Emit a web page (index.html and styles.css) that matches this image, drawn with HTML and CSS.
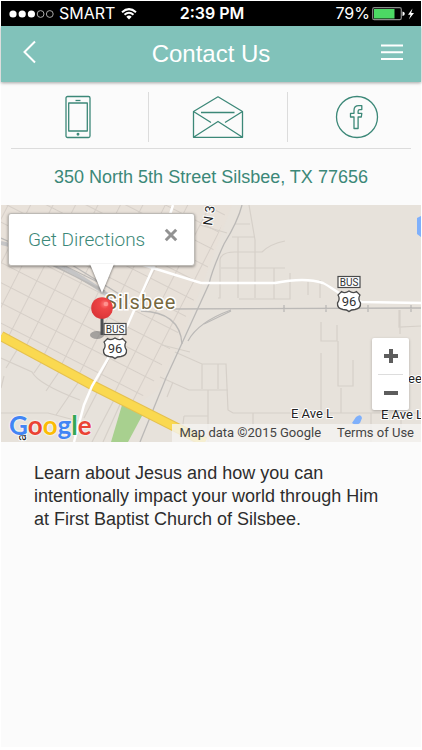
FILE: index.html
```html
<!DOCTYPE html>
<html lang="en">
<head>
<meta charset="utf-8">
<meta name="viewport" content="width=device-width, initial-scale=1">
<title>Contact Us</title>
<link rel="stylesheet" href="styles.css">
</head>
<body>
<div class="app">
  <div class="status">
    <div class="status-left">
      <svg class="signal" viewBox="0 0 46 10" aria-hidden="true">
        <circle cx="4" cy="5" r="3.6" class="on"/><circle cx="13.2" cy="5" r="3.6" class="on"/><circle cx="22.4" cy="5" r="3.6" class="on"/>
        <circle cx="31.6" cy="5" r="3.4" class="off"/><circle cx="40.8" cy="5" r="3.4" class="off"/>
      </svg>
      <span>SMART</span>
      <svg class="wifi" viewBox="0 0 16 12" aria-hidden="true">
        <path d="M1 4.2Q8-2 15 4.2M3.5 6.8Q8 2.8 12.5 6.8" class="arc"/><path d="M5.3 8.7Q8 6.4 10.7 8.7L8 11.6z" class="tip"/>
      </svg>
    </div>
    <span class="time">2:39 PM</span>
    <div class="status-right">
      <span>79%</span>
      <svg class="battery" viewBox="0 0 43 14" aria-hidden="true">
        <rect x="0.7" y="0.7" width="28.6" height="12" rx="1.6" fill="none" stroke="#8c8c8c" stroke-width="1.2"/>
        <rect x="2" y="2" width="20.5" height="9.500" fill="#4cd964"/>
        <path d="M30.500 4.500q2.300.4 2.300 2.200t-2.300 2.200z" fill="#fff"/>
        <path d="M40.500 1.500 36 7.700h2.600L37 12.200l5-6.200h-2.800z" fill="#fff"/>
      </svg>
    </div>
  </div>

  <header class="bar">
    <button class="bar-btn" type="button" aria-label="Back">
      <svg class="back" viewBox="0 0 14 24" aria-hidden="true"><path d="M12 1.500 1.500 12 12 22.500"/></svg>
    </button>
    <h1>Contact Us</h1>
    <button class="bar-btn" type="button" aria-label="Menu">
      <svg class="menu" viewBox="0 0 24 18" aria-hidden="true"><path d="M1 2.500h22M1 9.200h22M1 15.900h22"/></svg>
    </button>
  </header>

  <main>
    <nav class="channels" aria-label="Contact channels">
      <a href="#call" aria-label="Call">
        <svg class="ico phone" viewBox="0 0 26 44" aria-hidden="true">
          <rect x="1" y="1.500" width="24" height="41" rx="1.500"/><rect x="3.700" y="8" width="18.600" height="28"/><path d="M10.500 5.500h5"/><circle cx="13" cy="39.300" r=".8"/>
        </svg>
      </a>
      <a href="#email" aria-label="Email">
        <svg class="ico mail" viewBox="0 0 52 44" aria-hidden="true">
          <path d="M1.500 16.500 26 1.800 50.500 16.500V42.300h-49zM9 17.500h33.500M1.500 16.500 19 27.500M50.500 16.500 33 27.500M1.500 42.300 26 26.500 50.500 42.300"/>
        </svg>
      </a>
      <a href="#facebook" aria-label="Facebook">
        <svg class="ico fb" viewBox="0 0 44 44" aria-hidden="true">
          <circle cx="22" cy="22" r="20.500"/>
          <path d="M19 33.500v-11.500h-3.500v-3.700h3.500v-2.800q0-4.800 4.800-4.800h3v3.900h-2q-1.700 0-1.700 1.700v2h3.700l-.5 3.700h-3.200v11.500z"/>
        </svg>
      </a>
    </nav>

    <address>350 North 5th Street Silsbee, TX 77656</address>

    <section class="map" aria-label="Map">
      <svg class="tiles" viewBox="1 205 420 237" preserveAspectRatio="xMidYMid slice" role="img" aria-label="Map of Silsbee">
        <defs>
          <pattern id="blocks" width="20" height="18" patternUnits="userSpaceOnUse" patternTransform="translate(1 262) rotate(27)">
            <path d="M0 .5H20M.5 0V18" fill="none" stroke="#d6cfc8" stroke-width="1.100"/>
          </pattern>
          <radialGradient id="ball" cx=".62" cy=".32" r=".75"><stop offset="0" stop-color="#ff7a78"/><stop offset=".3" stop-color="#ee4546"/><stop offset="1" stop-color="#d93336"/></radialGradient>
          <g id="shield">
            <rect x="-11" y="-24.500" width="22" height="11" fill="#fff" stroke="#4a4a4a" stroke-width="1.200"/>
            <text x="0" y="-15.500" class="bus">BUS</text>
            <path d="M-7.500-9.500Q-4-7 0-10Q4-7 7.500-9.500L11-6Q8.500-2 11.500 2Q12 7.500 6 8.500Q2 8.500 0 10.500Q-2 8.500-6 8.500Q-12 7.500-11.500 2Q-8.500-2-11-6Z" fill="#fff" stroke="#4a4a4a" stroke-width="1.300"/>
            <text x="0" y="5" class="num">96</text>
          </g>
        </defs>
        <rect x="1" y="205" width="420" height="237" fill="#e7e2db"/>
        <path d="M1 205H232L205 278 186 328 158 390 137 404 1 334z" fill="#e8e1d9"/>
        <path d="M1 205H228L203 282 152 385 137 403 1 334z" fill="url(#blocks)"/>
        <path d="M128 442 143 414 136 408 122 405 111 442z" fill="#a8d08f"/>
        <g class="street">
          <path d="M1 358 32 372Q38 384 80 400M20 345 6 368M45 357 34 373M63 366 46 391M82 377 56 415M1 413H48L82 422M4 376 1 388M98 391 84 418M116 396 92 442M122 400 103 442"/>
          <path d="M175 352 202 364H226L228 410 233 413H421M202 364V389M218 364V389M160 377 189 390H228M208 390V442M184 416H208M184 416 182 432M253 413V430M173 382 167 397M162 345 190 352"/>
          <path d="M249 205 255 240V298M238 237V298M218 298H220V260Q221 252 235 252H262Q270 244 285 241M221 268H285M274 268V299M239 299H290V273M308 282V295M320 280V298M250 224H235M200 225 227 233M232 237H254"/>
          <path d="M321 322V341H337V325M338 341V386H353V360M341 388V413M321 353V413M399 310V327L421 326M371 413V442M400 310V334M401 413V440"/>
        </g>
        <g class="rail">
          <path d="M1 243Q48 252 112 298" class="band"/>
          <path d="M45 260 122 302M57 262 110 288M72 265 124 297M1 238 65 267M25 252 105 291"/>
          <path d="M242 205Q238 221 224 244 212 270 209 284L183 341 166 378 140 442"/>
          <path d="M166 309 421 308M284 305V312M326 305V312M368 305V312M411 305V312M188 341Q198 322 231 310"/>
          <path d="M141 311Q180 312 182 344M204 324 231 311"/>
        </g>
        <path d="M1 336 92 385 205 442" class="highway-edge"/><path d="M1 336 92 385 205 442" class="highway"/>
        <g class="main-road"><path d="M173 205 153 268 128 324 92 386 84 405 74 442"/><path d="M115 256 153 268 201 283H275Q305 277 323 283C335 289 345 300 362 302L421 303"/></g>
        <path d="M421 216 417 218V234L421 237zM356 417Q361 413 362 418L360 423Q356 426 352 423z" fill="#7fb0fb"/>
        <text class="place" x="105" y="309">Silsbee</text>
        <g class="road-name"><text x="291" y="418">E Ave L</text><text x="381" y="419">E Ave L</text><text x="408" y="383">ee</text><text transform="translate(212 226) rotate(-82)">N 3</text><text transform="translate(26 441) rotate(-90)">al</text></g>
        <use href="#shield" x="349" y="301"/>
        <ellipse cx="97" cy="335" rx="7" ry="4" fill="#777" opacity=".6"/>
        <use href="#shield" x="115" y="348"/>
        <path d="M102 316V335" stroke="#4e5053" stroke-width="3"/>
        <circle cx="102" cy="308" r="10.800" fill="url(#ball)"/><circle cx="106" cy="304" r="2.300" fill="#ff9c98" opacity=".8"/>
      </svg>

      <div class="callout">
        <a href="#directions">Get Directions</a>
        <button type="button" class="close" aria-label="Close"><svg viewBox="0 0 14 14" aria-hidden="true"><path d="M1.800 1.800 12.200 12.200M12.200 1.800 1.800 12.200"/></svg></button>
        <svg class="tail" viewBox="0 0 28 32" aria-hidden="true"><path d="M2 0H26L14 29z"/></svg>
      </div>

      <div class="zoom">
        <button type="button" aria-label="Zoom in"><svg viewBox="0 0 14 14" aria-hidden="true"><path d="M0 7H14M7 0V14"/></svg></button>
        <button type="button" aria-label="Zoom out"><svg viewBox="0 0 14 14" aria-hidden="true"><path d="M0 7H14"/></svg></button>
      </div>

      <a class="google" href="#google" aria-label="Google"><span class="b">G</span><span class="r">o</span><span class="y">o</span><span class="b">g</span><span class="g">l</span><span class="r">e</span></a>
      <div class="credit"><span>Map data ©2015 Google</span><a href="#terms">Terms of Use</a></div>
    </section>

    <p class="about">Learn about Jesus and how you can intentionally impact your world through Him at First Baptist Church of Silsbee.</p>
  </main>
</div>
</body>
</html>
```
FILE: styles.css
```css
* { box-sizing: border-box; }
body { margin: 0; padding: 1px; background: #fff; font-family: "Liberation Sans", Arial, sans-serif; }
button { padding: 0; border: 0; background: none; cursor: pointer; }
a { color: inherit; text-decoration: none; }
svg { display: block; fill: none; }
.app { min-height: calc(100vh - 4px); background: #fbfbfb; }

.status { display: grid; grid-template-columns: 1fr auto 1fr; align-items: center; height: 25px; padding: 0 6px 0 8px; background: #000; color: #fff; font: 16px/25px Inter, sans-serif; }
.status-left, .status-right { display: flex; align-items: center; }
.status-left { gap: 4px; }
.status-right { justify-content: flex-end; gap: 2px; }
.time { font-weight: 600; }
.signal { width: 46px; height: 10px; }
.signal .on { fill: #fff; }
.signal .off { stroke: #aaa; stroke-width: 1; }
.wifi { width: 16px; height: 12px; margin-left: 2px; }
.wifi .arc { stroke: #fff; stroke-width: 2; }
.wifi .tip { fill: #fff; }
.battery { width: 43px; height: 14px; }

.bar { display: flex; align-items: center; justify-content: space-between; height: 56px; padding: 0 16px; background: #81c2ba; color: #fff; box-shadow: 0 1px 3px rgba(0, 0, 0, .35); }
.bar h1 { margin: 0; font-size: 24px; line-height: 28px; font-weight: 400; }
.bar-btn { display: flex; align-items: center; justify-content: center; width: 26px; height: 44px; color: #fff; }
.bar-btn svg { stroke: currentColor; stroke-width: 2; }
.back { width: 14px; height: 24px; margin-bottom: 4px; }
.menu { width: 24px; height: 18px; margin-bottom: 4px; }

.channels { display: grid; grid-template-columns: 35fr 33fr 32fr; padding-top: 10px; height: 67px; position: relative; }
.channels::after { content: ""; position: absolute; left: 10px; right: 10px; bottom: 0; border-bottom: 1px solid #dcdcdc; }
.channels a { display: flex; align-items: center; justify-content: center; height: 50px; }
.channels a + a { border-left: 1px solid #dcdcdc; }
.channels a:first-child, .channels a:last-child { padding-left: 6px; }
.ico { height: 44px; stroke: #3c8878; stroke-width: 1.3; stroke-linejoin: round; }
.phone { width: 26px; }
.mail { width: 52px; }
.fb { width: 44px; }

address { height: 56px; color: #3c8878; font-size: 18px; line-height: 56px; font-style: normal; text-align: center; }

.map { position: relative; height: 237px; overflow: hidden; }
.tiles { width: 100%; height: 100%; }
.street { stroke: #d6d0c9; stroke-width: 1.2; }
.rail { stroke: #bbb9b7; stroke-width: 1.3; }
.rail .band { stroke: #c5c5c6; stroke-width: 4; }
.highway-edge { stroke: #e5c14f; stroke-width: 10; }
.highway { stroke: #fad950; stroke-width: 8; }
.main-road { stroke: #fff; stroke-width: 2.5; }
.place { font: 20px Roboto, sans-serif; letter-spacing: 1px; fill: #76683f; stroke: #fff; stroke-width: 3px; paint-order: stroke; }
.road-name { font: 13px Roboto, sans-serif; fill: #222; stroke: #fff; stroke-width: 2px; paint-order: stroke; }
.bus { font: 10px Roboto, sans-serif; fill: #333; text-anchor: middle; }
.num { font: 13px Roboto, sans-serif; fill: #333; text-anchor: middle; }

.callout { position: absolute; left: 7px; top: 8px; display: flex; align-items: center; width: 187px; height: 53px; padding: 0 16px 0 19px; justify-content: space-between; background: #fff; border: 1px solid #bdbab5; border-radius: 3px; box-shadow: 0 1px 3px rgba(0, 0, 0, .4); color: #3c8878; font: 300 19px/24px Roboto, sans-serif; }
.close { width: 14px; height: 14px; margin-bottom: 9px; }
.close svg { width: 14px; height: 14px; stroke: #929292; stroke-width: 3; }
.tail { position: absolute; left: 79px; top: 50px; width: 28px; height: 32px; fill: #fff; filter: drop-shadow(0 1px 1px rgba(0, 0, 0, .5)); }

.zoom { position: absolute; right: 12px; top: 133px; width: 37px; padding: 0 6px; background: #fff; border-radius: 2px; box-shadow: 0 1px 3px rgba(0, 0, 0, .25); }
.zoom button { display: flex; align-items: center; justify-content: center; width: 100%; height: 36px; }
.zoom button + button { border-top: 1px solid #ddd; }
.zoom svg { width: 14px; height: 14px; stroke: #5d5d5d; stroke-width: 4; }

.google { position: absolute; left: 8px; bottom: 1px; font: 700 26px/32px Lato, sans-serif; text-shadow: 0 0 2px #fff, 0 0 2px #fff; }
.b { color: #4285f4; }
.r { color: #ea4335; }
.y { color: #fbbc05; }
.g { color: #34a853; }
.credit { position: absolute; right: 0; bottom: 0; display: flex; gap: 16px; padding: 0 7px; background: rgba(245, 244, 241, .8); color: #444; font: 13px/18px Roboto, sans-serif; }

.about { margin: 0; padding: 20px 33px; color: #2d2d2d; font-size: 18px; line-height: 23px; }
```
